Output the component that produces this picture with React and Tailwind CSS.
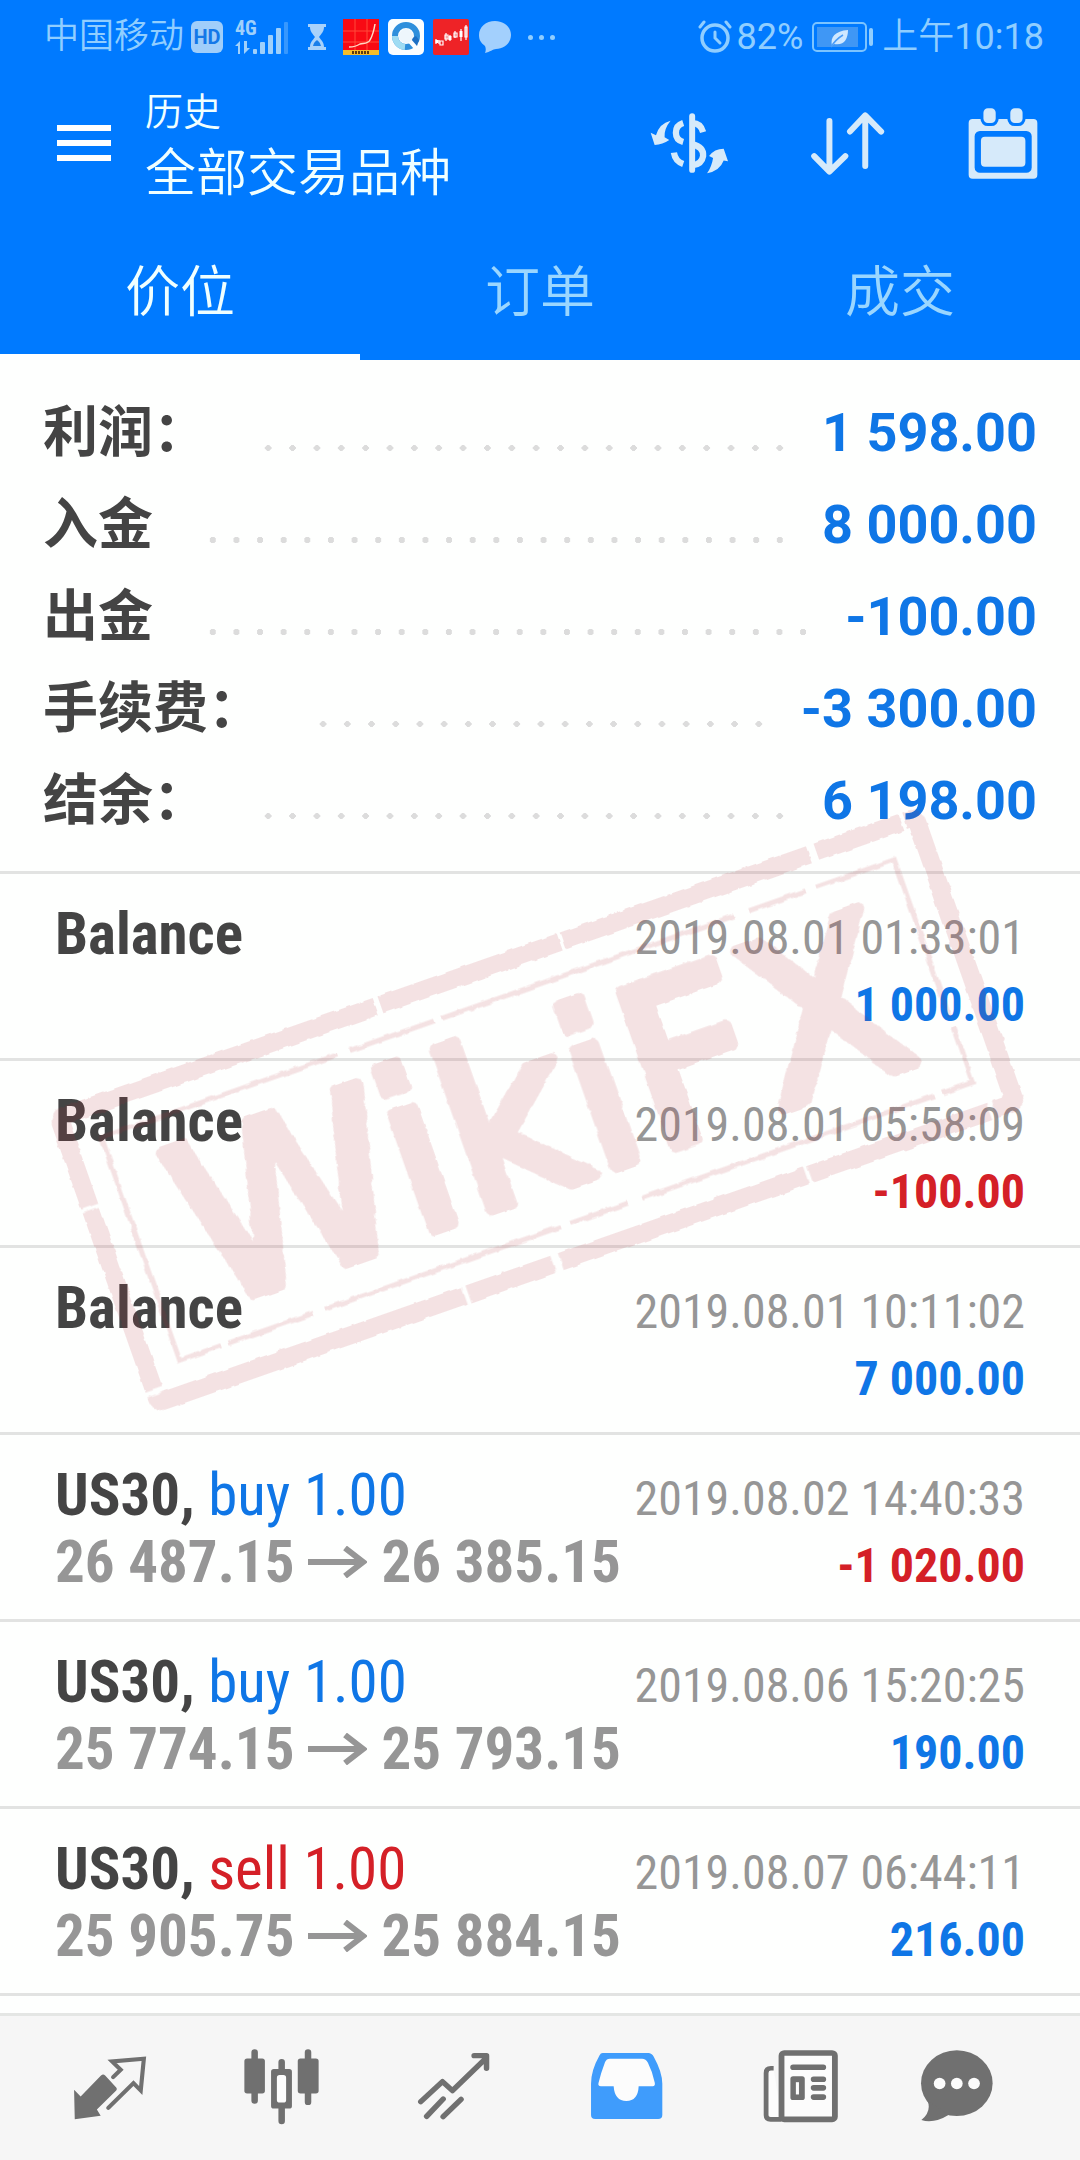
import React, { useState } from 'react';

const SUMMARY = [
  { label: '利润：', value: '1 598.00' },
  { label: '入金', value: '8 000.00' },
  { label: '出金', value: '-100.00' },
  { label: '手续费：', value: '-3 300.00' },
  { label: '结余：', value: '6 198.00' },
];

const HISTORY = [
  { symbol: 'Balance', time: '2019.08.01 01:33:01', profit: '1 000.00' },
  { symbol: 'Balance', time: '2019.08.01 05:58:09', profit: '-100.00' },
  { symbol: 'Balance', time: '2019.08.01 10:11:02', profit: '7 000.00' },
  { symbol: 'US30', side: 'buy', volume: '1.00', open: '26 487.15', close: '26 385.15', time: '2019.08.02 14:40:33', profit: '-1 020.00' },
  { symbol: 'US30', side: 'buy', volume: '1.00', open: '25 774.15', close: '25 793.15', time: '2019.08.06 15:20:25', profit: '190.00' },
  { symbol: 'US30', side: 'sell', volume: '1.00', open: '25 905.75', close: '25 884.15', time: '2019.08.07 06:44:11', profit: '216.00' },
];

const TABS = ['价位', '订单', '成交'];

/* ---------- Status bar ---------- */

const SignalIcon = () => (
  <svg className="w-[54px] h-[34px]" viewBox="0 0 54 34" fill="#9fd0fb">
    <path d="M0 26l5-5v13H3v-8zM9 21v13l6-6h-3v-7z" />
    <rect x="18" y="29" width="4" height="5" rx="1" />
    <rect x="25" y="22" width="5" height="12" rx="1" />
    <rect x="33" y="15" width="5" height="19" rx="1" />
    <rect x="41" y="8" width="5" height="26" rx="1" />
    <rect x="49" y="2" width="4" height="32" rx="1" opacity="0.35" />
  </svg>
);

const HourglassIcon = () => (
  <svg className="w-[20px] h-[26px]" viewBox="0 0 20 26" fill="#a8d2fb">
    <path d="M1 0h18v3h-2c0 5-3 7-5 10 2 3 5 5 5 10h2v3H1v-3h2c0-5 3-7 5-10C6 10 3 8 3 3H1z" />
    <path d="M6 22c1-4 3-5 4-6 1 1 3 2 4 6z" fill="#1a7fea" />
  </svg>
);

const QuoteAppIcon = () => (
  <svg className="w-[36px] h-[36px]" viewBox="0 0 36 36">
    <rect width="36" height="36" fill="#f80a14" />
    <path d="M12 0v31M24 0v31M0 12h36M0 23h36" stroke="#ff4a3a" strokeWidth="1" />
    <path d="M6 28c6 0 8-1 11-3 4-1 8 0 10-4 3-5 4-10 5-16" fill="none" stroke="#ffd9c4" strokeWidth="1.5" />
    <rect y="31" width="36" height="5" fill="#f3bd2b" />
    <path d="M9 33.500h18" stroke="#5d3b10" strokeWidth="3" strokeDasharray="2 1" />
  </svg>
);

const BrowserAppIcon = () => (
  <svg className="w-[36px] h-[36px]" viewBox="0 0 36 36">
    <rect width="36" height="36" rx="5" fill="#fafdff" />
    <circle cx="18" cy="17" r="11" fill="none" stroke="#2f8fdc" strokeWidth="6" />
    <path d="M7 17a11 11 0 0 0 10 11" fill="none" stroke="#9fdcf3" strokeWidth="6" />
    <path d="M17 20l10 11 4-1v-6l-7-6z" fill="#fafdff" />
    <path d="M23 20l6 7 2-6-3-4z" fill="#1d6fc4" />
    <circle cx="18" cy="17" r="7" fill="#eef6fc" />
  </svg>
);

const CandleAppIcon = () => (
  <svg className="w-[36px] h-[36px]" viewBox="0 0 36 36">
    <rect width="36" height="36" rx="2" fill="#ee2327" />
    <g fill="none" stroke="#fff" strokeWidth="1.200">
      <path d="M3 20v5M6 21v4M13 14v8M17 16v6M22 12v7M28 10v12M33 6v15" />
      <path d="M7 22h3v4H7zM12 16h3v4h-3zM21 14h3v4h-3zM32 8h2v10h-2z" />
      <path d="M4 21v3M17 17v4M28 12v6" strokeWidth="3" />
    </g>
  </svg>
);

const MessageIcon = () => (
  <svg className="w-[34px] h-[34px]" viewBox="0 0 34 34" fill="#a3d0fd">
    <path d="M17 1c9 0 16 6 16 14s-7 14-15 14c-3 0-6 3-11 4 1-2 1-5 0-7-4-3-6-6-6-11C1 7 8 1 17 1z" />
  </svg>
);

const AlarmIcon = () => (
  <svg className="w-[34px] h-[34px]" viewBox="0 0 34 34" fill="none" stroke="#90ceff" strokeLinecap="round">
    <circle cx="17" cy="18" r="13" strokeWidth="3.500" />
    <path d="M17 12v6l5 5" strokeWidth="3" />
    <path d="M2 7l4-5M32 7l-4-5" strokeWidth="3" />
  </svg>
);

const BatteryIcon = () => (
  <svg className="w-[62px] h-[30px]" viewBox="0 0 62 30">
    <rect x="1" y="1" width="53" height="28" rx="4" fill="none" stroke="#7cc4ff" strokeWidth="2" />
    <rect x="5" y="5" width="41" height="20" fill="#3f97f5" />
    <path d="M20 24c-2-9 3-15 16-16 0 9-4 16-14 14z" fill="#cfe8ff" />
    <path d="M19 25c3-5 7-9 12-12" stroke="#4a9df8" strokeWidth="1.500" fill="none" />
    <rect x="57" y="6" width="4" height="18" rx="2" fill="#90ceff" />
  </svg>
);

const StatusBar = () => (
  <div className="flex h-[72px] items-center justify-between pt-[2px] pr-[36px] pl-[44px] text-[36px] font-[350] text-[#90ceff]">
    <div className="flex items-center">
      <span className="text-[35px]">中国移动</span>
      <span className="ml-[7px] flex h-8 w-8 items-center justify-center rounded-md bg-[#a0cefa] text-[20px] font-bold text-[#1478e8]">HD</span>
      <span className="relative ml-3">
        <SignalIcon />
        <span className="absolute -top-1 left-0 font-['Roboto_Condensed','Roboto',sans-serif] text-[20px] leading-6 font-bold text-[#9fd0fb]">4G</span>
      </span>
      <span className="ml-[18px]"><HourglassIcon /></span>
      <div className="ml-4 flex items-center gap-[9px]">
        <QuoteAppIcon />
        <BrowserAppIcon />
        <CandleAppIcon />
        <MessageIcon />
      </div>
      <div className="ml-4 flex gap-[6px]">
        <i className="h-[5px] w-[5px] rounded-full bg-[#90ceff]" />
        <i className="h-[5px] w-[5px] rounded-full bg-[#90ceff]" />
        <i className="h-[5px] w-[5px] rounded-full bg-[#90ceff]" />
      </div>
    </div>
    <div className="flex items-center">
      <AlarmIcon />
      <span className="ml-1 font-normal">82%</span>
      <span className="ml-[9px]"><BatteryIcon /></span>
      <span className="ml-2">上午<span className="font-normal">10:18</span></span>
    </div>
  </div>
);

/* ---------- Header ---------- */

const MenuIcon = () => (
  <svg className="w-[54px] h-[36px]" viewBox="0 0 54 36" fill="#fff">
    <path d="M0 0h54v6H0zM0 15h54v6H0zM0 30h54v6H0z" />
  </svg>
);

const CurrencyIcon = () => (
  <svg className="w-[79px] h-[62px]" viewBox="0 0 238 186" fill="none" stroke="#d6eafa">
    <path d="M127 12v162" strokeWidth="18" strokeLinecap="round" />
    <path d="M100 33Q78 40 78 62T100 90M72 122Q76 148 100 156M127 33Q152 32 160 60M127 97Q162 104 160 132Q156 158 127 160" strokeWidth="19" />
    <path d="M62 26Q28 34 18 70L2 62L14 99Q38 98 58 84L44 76Q42 50 62 26zM172 184Q186 164 190 138L178 132Q194 110 222 110L235 148L222 146Q210 178 172 184z" fill="#d6eafa" stroke="none" />
  </svg>
);

const SortIcon = () => (
  <svg className="w-[76px] h-[65px]" viewBox="0 0 228 196" fill="none" stroke="#d6eafa" strokeWidth="18" strokeLinecap="round" strokeLinejoin="round">
    <path d="M58 30V182M12 136L58 183L106 136M166 166V14M120 62L166 13L214 62" />
  </svg>
);

const CalendarIcon = () => (
  <svg className="w-[72px] h-[73px]" viewBox="0 0 215 220">
    <path fillRule="evenodd" fill="#d6eafa" d="M16 36H199a12 12 0 0 1 12 12V204a12 12 0 0 1-12 12H16a12 12 0 0 1-12-12V48a12 12 0 0 1 12-12zM38 72a16 16 0 0 0-16 16V182a16 16 0 0 0 16 16H178a16 16 0 0 0 16-16V88a16 16 0 0 0-16-16z" />
    <rect x="41" y="90" width="134" height="90" rx="12" fill="#d6eafa" />
    <rect x="44" y="-1" width="46" height="54" rx="18" fill="#d6eafa" stroke="#007aff" strokeWidth="9" />
    <rect x="125" y="-1" width="46" height="54" rx="18" fill="#d6eafa" stroke="#007aff" strokeWidth="9" />
  </svg>
);

const Header = ({ activeTab, onTabChange }) => (
  <header className="bg-[#007aff] text-[#f0ffff]">
    <StatusBar />

    <div className="flex h-[140px] items-center justify-between pt-[2px] pr-[41px] pl-[57px]">
      <div className="flex items-center gap-[34px]">
        <button type="button" aria-label="菜单"><MenuIcon /></button>
        <div className="leading-[61px]">
          <h1 className="text-[38px] font-[350]">历史</h1>
          <p className="text-[51px] font-[350]">全部交易品种</p>
        </div>
      </div>
      <div className="flex items-center gap-[81px]">
        <button type="button" aria-label="货币"><CurrencyIcon /></button>
        <button type="button" aria-label="排序"><SortIcon /></button>
        <button type="button" aria-label="日期"><CalendarIcon /></button>
      </div>
    </div>

    {/* Tabs */}
    <div className="grid h-[148px] grid-cols-3" role="tablist">
      {TABS.map((tab) => (
        <button
          key={tab}
          type="button"
          role="tab"
          aria-selected={activeTab === tab}
          onClick={() => onTabChange(tab)}
          className={
            activeTab === tab
              ? 'border-b-[6px] border-white pt-[18px] text-[55px] font-[350] text-[#f0ffff]'
              : 'border-b-[6px] border-transparent pt-[18px] text-[55px] font-[350] text-[#9ad6ff]'
          }
        >
          {tab}
        </button>
      ))}
    </div>
  </header>
);

/* ---------- Content ---------- */

const Summary = () => (
  <dl className="px-[43px] pt-[26px] pb-[25px]">
    {SUMMARY.map((row) => (
      <div key={row.label} className="flex h-[92px] items-center">
        <dt className="text-[55px] font-bold text-[#444444]">{row.label}</dt>
        <dd className="flex flex-1 items-center">
          <span className="mt-[32px] mr-[30px] ml-[48px] h-[6px] flex-1 bg-[radial-gradient(circle,#dcdcdc_3px,transparent_3px)] bg-[length:24px_6px] bg-repeat-round" />
          <span className="text-[54px] font-bold text-[#0f76e6]">{row.value}</span>
        </dd>
      </div>
    ))}
  </dl>
);

const PriceArrow = () => (
  <svg className="mx-[14px] inline-block h-[32px] w-[59px]" viewBox="0 0 59 32" fill="none" stroke="#969696" strokeWidth="6">
    <path d="M0 16h55M37 2l18 14-18 14" />
  </svg>
);

const HistoryItem = ({ item }) => {
  const profitColor = item.profit.startsWith('-') ? 'text-[#d42027]' : 'text-[#0f76e6]';
  const sideColor = item.side === 'sell' ? 'text-[#d42027]' : 'text-[#0f76e6]';

  return (
    <li className="h-[187px] border-t-[3px] border-[#e2e3e2] px-[55px] pt-[26px] font-['Roboto_Condensed','Roboto','Noto_Sans_CJK_SC',sans-serif] leading-[67px]">
      <div className="flex h-[67px] items-baseline justify-between">
        <span className="text-[59px] font-bold text-[#444444]">
          {item.symbol}
          {item.side && (
            <>
              , <span className={`font-normal ${sideColor}`}>{item.side} {item.volume}</span>
            </>
          )}
        </span>
        <time className="text-[48px] text-[#969696]">{item.time}</time>
      </div>
      <div className="flex h-[67px] items-baseline justify-between">
        <span className="flex items-center text-[59px] font-bold text-[#969696]">
          {item.open ? (
            <>
              {item.open}
              <PriceArrow />
              {item.close}
            </>
          ) : (
            '\u00a0'
          )}
        </span>
        <span className={`text-[48px] font-bold ${profitColor}`}>{item.profit}</span>
      </div>
    </li>
  );
};

// Rubber stamp laid over the history list
const Stamp = () => (
  <svg className="pointer-events-none absolute top-[430px] left-0 w-full" viewBox="0 0 1080 640" aria-hidden="true">
    <defs>
      <filter id="worn" x="-5%" y="-5%" width="110%" height="110%">
        <feTurbulence type="fractalNoise" baseFrequency="0.08" numOctaves="3" seed="4" result="n" />
        <feDisplacementMap in="SourceGraphic" in2="n" scale="5" xChannelSelector="R" yChannelSelector="G" />
      </filter>
    </defs>
    <g transform="rotate(-19.300 537 320)" opacity="0.13" filter="url(#worn)" stroke="#b52a38" fill="none">
      <rect x="83" y="169" width="908" height="302" rx="6" strokeWidth="18" strokeDasharray="330 5 190 4 260 8 90 4" />
      <rect x="117" y="202" width="840" height="236" strokeWidth="5" strokeDasharray="250 12 90 8 310 16 60 10" />
      <text
        x="161"
        y="400"
        fontSize="225"
        fontFamily="DejaVu Sans, sans-serif"
        fill="#b52a38"
        strokeWidth="12"
        strokeLinejoin="round"
      >
        WikiFX
      </text>
    </g>
  </svg>
);

/* ---------- Bottom navigation ---------- */

const QuotesIcon = () => (
  <svg className="w-[76px] h-[67px]" viewBox="0 0 220 200" preserveAspectRatio="none">
    <path d="M6 110L25 130L84 67Q90 61 96 67L128 103Q132 108 128 112L72 169L83 187L8 198z" fill="#707070" />
    <path d="M119 72L141 50L116 25L208 17L199 112L178 90L105 164" fill="none" stroke="#707070" strokeWidth="12" strokeLinecap="round" />
  </svg>
);

const ChartIcon = () => (
  <svg className="w-[77px] h-[77px]" viewBox="0 0 225 230" fill="#707070" preserveAspectRatio="none">
    <path d="M34 13V157M190 13V161M113 42V70M113 180V218" stroke="#707070" strokeWidth="19" strokeLinecap="round" />
    <rect x="4" y="31" width="60" height="105" rx="8" />
    <rect x="160" y="31" width="61" height="105" rx="8" />
    <rect x="82" y="63" width="61" height="118" rx="8" />
    <rect x="99" y="81" width="27" height="82" rx="8" fill="#fdfdfd" />
  </svg>
);

const TradeIcon = () => (
  <svg className="w-[74px] h-[70px]" viewBox="0 0 215 210" fill="none" stroke="#707070" strokeWidth="16" strokeLinecap="round" strokeLinejoin="round" preserveAspectRatio="none">
    <path d="M11 152L74 92L103 119L197 25M166 14H202V52M28 196L76 144M76 197L128 145" />
  </svg>
);

const HistoryIcon = () => (
  <svg className="w-[73px] h-[68px]" viewBox="0 0 213 203" preserveAspectRatio="none">
    <path fill="#3f9cfc" d="M37 3H170Q180 3 186 14Q211 60 211 95V188Q211 200 199 200H15Q3 200 3 188V95Q3 55 28 10Q31 3 37 3z" />
    <path fill="#fcfcfc" d="M58 20H152Q163 20 169 32Q183 60 189 92Q191 102 183 102H142Q140 146 106 146Q72 146 69 102H32Q22 102 25 92Q32 62 44 30Q48 20 58 20z" />
  </svg>
);

const NewsIcon = () => (
  <svg className="w-[77px] h-[74px]" viewBox="0 0 225 223" fill="none" stroke="#707070" preserveAspectRatio="none">
    <path d="M34 58H26Q12 58 12 72V200Q12 212 25 212H57" strokeWidth="14" fill="#fcfcfc" />
    <rect x="57" y="12" width="156" height="200" rx="8" strokeWidth="17" fill="#fcfcfc" />
    <path d="M91 55H179M151 91H179M151 117H179M151 145H179" strokeWidth="17" strokeLinecap="round" />
    <rect x="83" y="82" width="42" height="72" rx="8" fill="#707070" stroke="none" />
    <rect x="99" y="100" width="9" height="37" fill="#fcfcfc" stroke="none" />
  </svg>
);

const ChatIcon = () => (
  <svg className="w-[74px] h-[74px]" viewBox="0 0 215 223" preserveAspectRatio="none">
    <ellipse cx="107" cy="103" rx="104" ry="99" fill="#707070" />
    <path d="M22 156Q34 188 4 214Q40 226 84 198z" fill="#707070" />
    <circle cx="57" cy="104" r="17" fill="#fcfcfc" />
    <circle cx="107" cy="104" r="17" fill="#fcfcfc" />
    <circle cx="157" cy="104" r="17" fill="#fcfcfc" />
  </svg>
);

const NAV_ITEMS = [
  { label: '行情', Icon: QuotesIcon },
  { label: '图表', Icon: ChartIcon },
  { label: '交易', Icon: TradeIcon },
  { label: '历史', Icon: HistoryIcon },
  { label: '新闻', Icon: NewsIcon },
  { label: '聊天', Icon: ChatIcon },
];

const BottomNav = () => (
  <nav className="mt-auto grid h-[147px] grid-cols-[172fr_172fr_172fr_174fr_174fr_140fr] items-center border-t-[3px] border-[#e4e6e4] bg-[#f6f6f6] pr-[53px] pb-[4px] pl-6">
    {NAV_ITEMS.map(({ label, Icon }) => (
      <button key={label} type="button" aria-label={label} className="flex justify-center">
        <Icon />
      </button>
    ))}
  </nav>
);

const App = () => {
  const [activeTab, setActiveTab] = useState('价位');

  return (
    <div className="flex min-h-screen flex-col bg-[#fefffe] font-['Roboto','Noto_Sans_CJK_SC',sans-serif]">
      <Header activeTab={activeTab} onTabChange={setActiveTab} />
      <main className="relative">
        <Summary />
        <ul className="border-b-[3px] border-[#e2e3e2]">
          {HISTORY.map((item) => (
            <HistoryItem key={item.time} item={item} />
          ))}
        </ul>
        <Stamp />
      </main>
      <BottomNav />
    </div>
  );
};

export default App;
